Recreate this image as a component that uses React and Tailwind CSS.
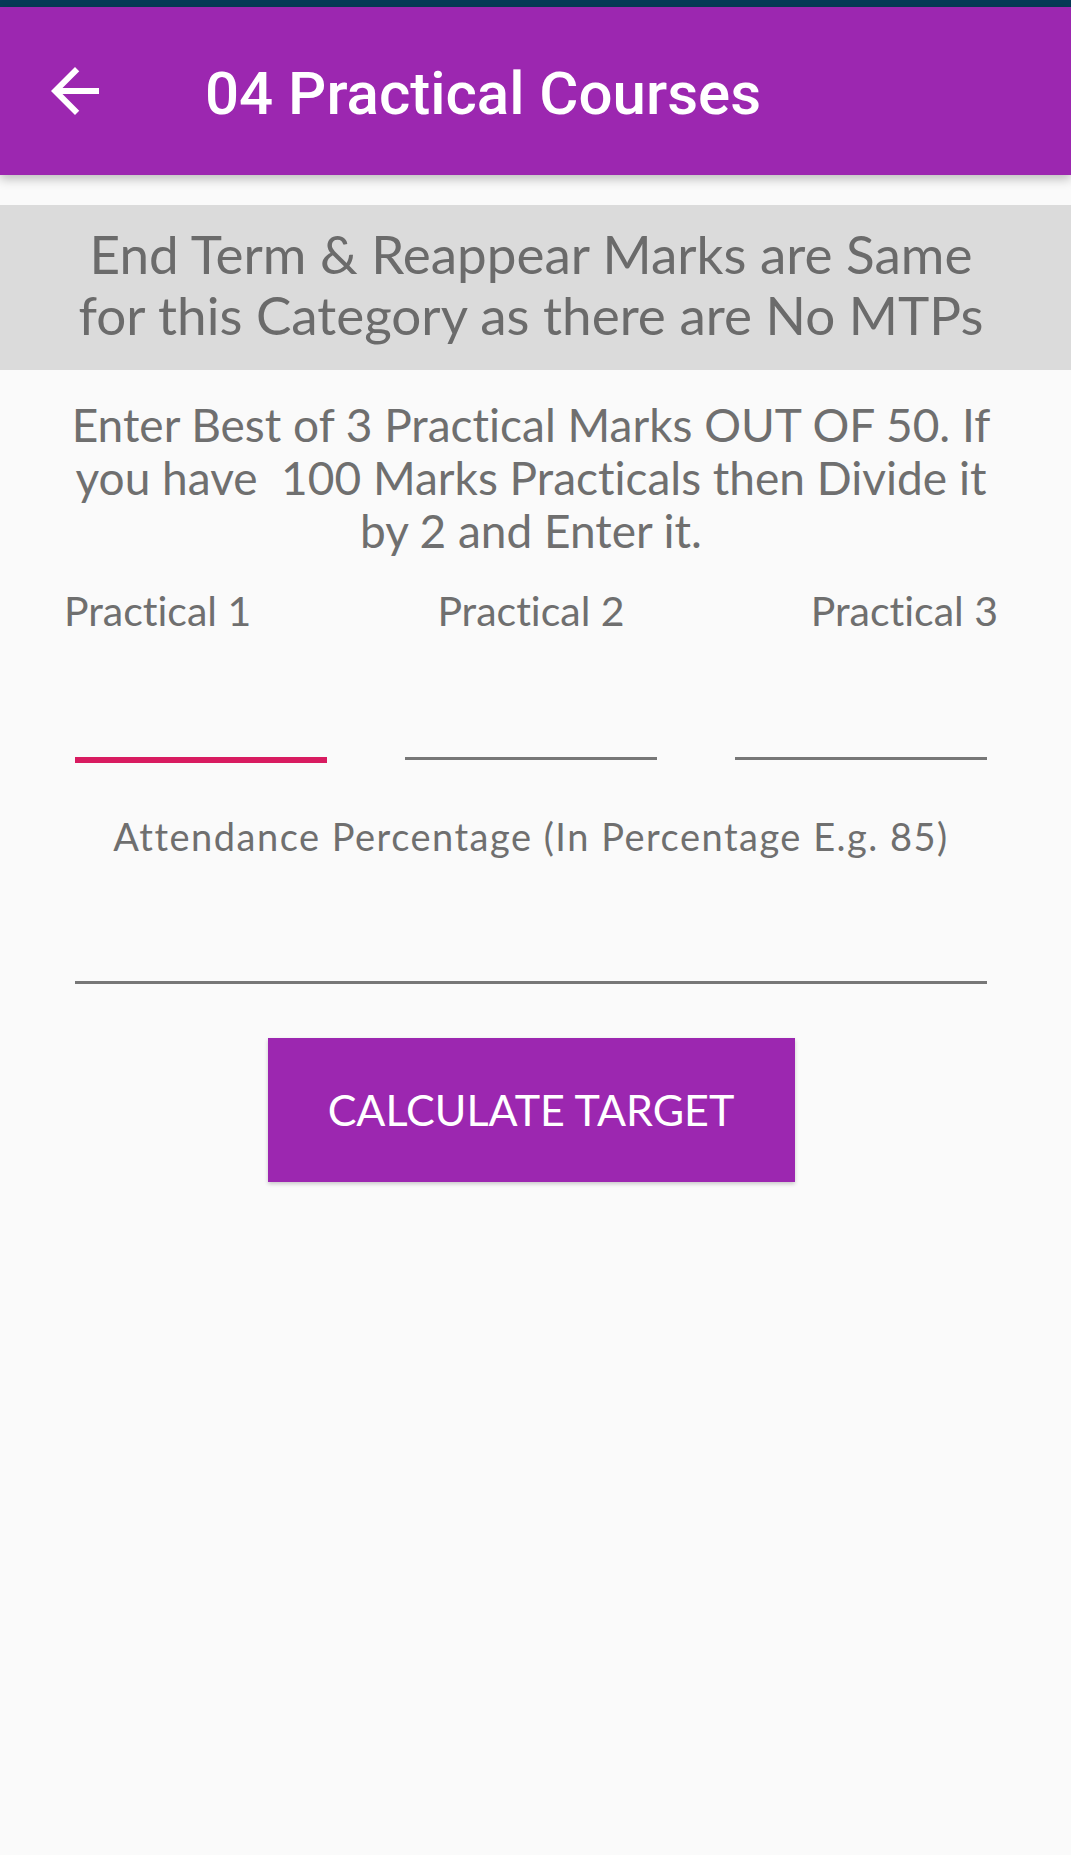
function LineInput({ focused }) {
    return (
        <div
            className={`w-[252px] ${
                focused ? 'h-[129px] border-b-[6px] border-[#d81b60]' : 'h-[126px] border-b-[3px] border-[#777777]'
            }`}
        />
    );
}

export default function App() {
    return (
        <div className="min-h-[1855px] w-full bg-[#fafafa] font-[Lato,sans-serif] text-[#6f6f6f] [font-variant-ligatures:none]">
            <div className="h-[7px] bg-[#073b57]" />
            <header className="relative z-10 flex h-[168px] items-center bg-[#9c27b0] shadow-[0_4px_10px_rgba(0,0,0,0.25)]">
                <button type="button" aria-label="Back" className="ml-[39px] flex h-[72px] w-[72px] items-center justify-center">
                    <svg viewBox="0 0 24 24" className="h-[72px] w-[72px] fill-white">
                        <path d="M20 11H7.83l5.59-5.59L12 4l-8 8 8 8 1.41-1.41L7.83 13H20v-2z" />
                    </svg>
                </button>
                <h1 className="ml-[94px] mt-[6px] font-[Roboto,sans-serif] text-[60px] font-medium text-white">
                    04 Practical Courses
                </h1>
            </header>

            <div className="mt-[30px] flex h-[165px] flex-col items-center justify-center bg-[#dbdbdb] pb-[7px] pr-[9px] text-center text-[53px] leading-[61px] text-[#6b6b6b]">
                <p>End Term &amp; Reappear Marks are Same</p>
                <p>for this Category as there are No MTPs</p>
            </div>

            <div className="pl-[75px] pr-[84px]">
                <p className="-mx-[20px] mt-[28px] text-center text-[46px] leading-[53px]">
                    Enter Best of 3 Practical Marks OUT OF 50. If
                    <br />
                    you have&nbsp; 100 Marks Practicals then Divide it
                    <br />
                    by 2 and Enter it.
                </p>

                <div className="-mx-[11px] mt-[30px] grid grid-cols-3 text-[41px] leading-[47px]">
                    <span className="text-left">Practical 1</span>
                    <span className="text-center">Practical 2</span>
                    <span className="text-right">Practical 3</span>
                </div>

                <div className="flex items-start justify-between">
                    <LineInput focused />
                    <LineInput />
                    <LineInput />
                </div>

                <p className="-mx-[20px] mt-[52px] text-center text-[38px] leading-[43px] tracking-[1.5px]">
                    Attendance Percentage (In Percentage E.g. 85)
                </p>
                <div className="h-[126px] border-b-[3px] border-[#777777]" />

                <div className="mt-[54px] flex justify-center">
                    <button
                        type="button"
                        className="h-[144px] w-[527px] bg-[#9c27b0] text-[43px] text-white shadow-[0_2px_4px_rgba(0,0,0,0.2)]"
                    >
                        CALCULATE TARGET
                    </button>
                </div>
            </div>
        </div>
    );
}
